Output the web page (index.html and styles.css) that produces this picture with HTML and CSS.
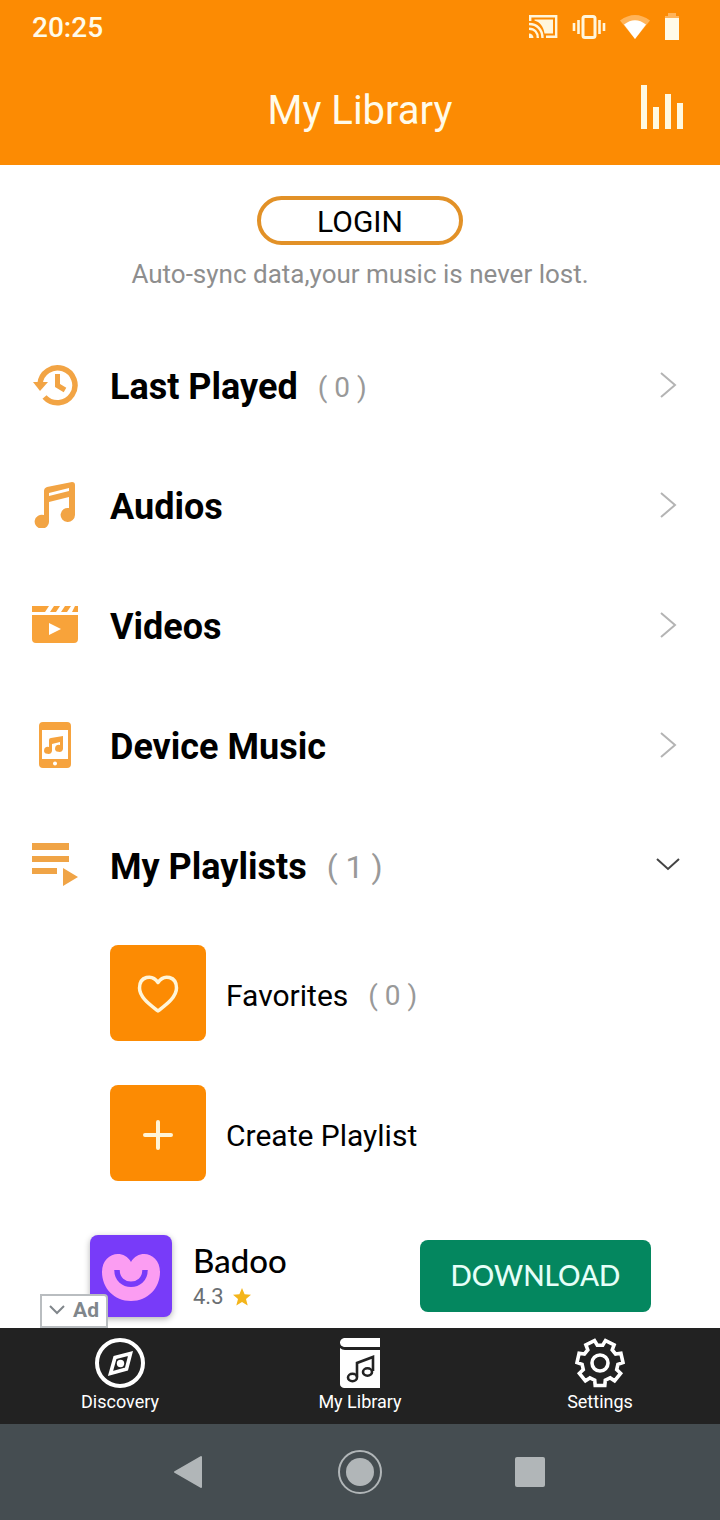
FILE: index.html
```html
<!DOCTYPE html>
<html lang="en">
<head>
<meta charset="utf-8">
<meta name="viewport" content="width=device-width, initial-scale=1">
<title>My Library</title>
<link rel="stylesheet" href="styles.css">
</head>
<body>
<header class="top">
  <div class="status">
    <time class="clock">20:25</time>
    <div class="status-icons">
      <svg width="30" height="26" viewBox="0 0 30 26" fill="none" stroke="#fff6dc" stroke-width="2.4"><path d="M1.200 7V2.200H27.200V22.800H17"/><path d="M5.500 6.500V5.500H24V19.500H15.500C14.500 12 10.500 8 5.500 6.500Z" fill="#fff6dc" stroke="none"/><path d="M0 10C8 10 13.500 15.500 13.500 24M0 14.800C5.500 14.800 8.800 18.500 8.800 24"/><path d="M0 19.500A4.500 4.500 0 0 1 4.500 24H0Z" fill="#fff6dc" stroke="none"/></svg>
      <svg width="34" height="26" viewBox="0 0 34 26" fill="none" stroke="#fff6dc"><rect x="11" y="2.500" width="12" height="21" rx="2" stroke-width="3"/><path d="M6.500 6V20M27.500 6V20" stroke-width="2.600"/><path d="M2 9V17M32 9V17" stroke-width="2.600"/></svg>
      <svg width="32" height="26" viewBox="0 0 32 26"><path d="M1 6.500Q16-4.500 31 6.500L16 25Z" fill="#ffb45a"/><path d="M5 10.500Q16 2 27 10.500L16 25Z" fill="#fff"/></svg>
      <svg width="16" height="28" viewBox="0 0 16 28"><path d="M4 0H12V3H15V6H1V3H4Z" fill="#ffb45a"/><path d="M1 5H15V27H1Z" fill="#fffbe8"/></svg>
    </div>
  </div>
  <div class="title-bar">
    <h1 class="title">My Library</h1>
    <button class="eq" aria-label="Equalizer"><svg width="44" height="44" viewBox="0 0 44 44" fill="#fff9e0"><path d="M1 0H7V44H1ZM13 22H19V44H13ZM25 9H31V44H25ZM37 18H43V44H37Z"/></svg></button>
  </div>
</header>

<main class="content">
  <section class="account">
    <button class="login">LOGIN</button>
    <p class="hint">Auto-sync data,your music is never lost.</p>
  </section>

  <nav class="menu" aria-label="Library">
    <button class="row">
      <svg class="icon" viewBox="0 0 46 46" fill="none" stroke="#f2a444"><path d="M8 22A17.500 17.500 0 1 1 12.500 35" stroke-width="5.500"/><path d="M1 20H16L8 29Z" fill="#f2a444" stroke="none"/><path d="M25.500 12V23.500L33 28" stroke-width="5"/></svg>
      <span class="label">Last Played</span><span class="count">( 0 )</span>
      <svg class="arrow" viewBox="0 0 24 30"><path d="M5 3L19 15L5 27"/></svg>
    </button>
    <button class="row">
      <svg class="icon" viewBox="0 0 46 46" fill="#f2a444"><path fill-rule="evenodd" d="M12 39V9Q12 6 15 5L40 0Q43 0 43 3V33A7.200 7 0 1 1 37 26V15L17 20V39A7.200 7 0 1 1 12 33ZM17 11V14L37 9V6Z"/></svg>
      <span class="label">Audios</span>
      <svg class="arrow" viewBox="0 0 24 30"><path d="M5 3L19 15L5 27"/></svg>
    </button>
    <button class="row">
      <svg class="icon" viewBox="0 0 46 46" fill="#f8a33a"><path d="M0 4H17L13 10H0ZM22 4H28L24 10H18ZM33 4H39L35 10H29ZM43 4H46V10H40Z"/><path fill-rule="evenodd" d="M0 13H46V37Q46 41 42 41H4Q0 41 0 37ZM17 21V33L29 27Z"/></svg>
      <span class="label">Videos</span>
      <svg class="arrow" viewBox="0 0 24 30"><path d="M5 3L19 15L5 27"/></svg>
    </button>
    <button class="row">
      <svg class="icon" viewBox="0 0 46 46" fill="#f6a33e"><path fill-rule="evenodd" d="M11 0H35Q39 0 39 4V42Q39 46 35 46H11Q7 46 7 42V4Q7 0 11 0ZM10 8V37H36V8ZM23 39.500A2 2 0 1 0 23 43.500A2 2 0 1 0 23 39.500Z"/><path fill-rule="evenodd" d="M17 28V18Q17 16 19 16L31 14V27A4 3.500 0 1 1 28 23V20L20 22V29A4 3.500 0 1 1 17 25Z"/></svg>
      <span class="label">Device Music</span>
      <svg class="arrow" viewBox="0 0 24 30"><path d="M5 3L19 15L5 27"/></svg>
    </button>
    <button class="row" aria-expanded="true">
      <svg class="icon" viewBox="0 0 46 46" fill="#f0a446"><path d="M0 1H37V8H0ZM0 14H37V20H0ZM0 26H25V32H0ZM31 26L46 35L31 44Z"/></svg>
      <span class="label">My Playlists</span><span class="count count-large">( 1 )</span>
      <svg class="arrow arrow-open" viewBox="0 0 24 30"><path d="M1 9L12 19L23 9"/></svg>
    </button>
  </nav>

  <div class="playlists">
    <button class="playlist">
      <span class="tile"><svg width="44" height="44" viewBox="0 0 44 44" fill="none" stroke="#fff5d8" stroke-width="3.500" stroke-linejoin="round"><path d="M22 40C16 35 3.500 27 3.500 17C3.500 5.500 16 2.500 22 11.500C28 2.500 40.500 5.500 40.500 17C40.500 27 28 35 22 40Z"/></svg></span>
      <span class="name">Favorites</span><span class="count">( 0 )</span>
    </button>
    <button class="playlist">
      <span class="tile"><svg width="44" height="44" viewBox="0 0 44 44" fill="none" stroke="#fff5d8" stroke-width="4" stroke-linecap="round"><path d="M22 11V37M9 24H35"/></svg></span>
      <span class="name">Create Playlist</span>
    </button>
  </div>

  <aside class="ad">
    <svg class="ad-logo" viewBox="0 0 82 82"><path d="M41 66C24 66 12 53 12 37C12 18 33 13 41 27C49 13 70 18 70 37C70 53 58 66 41 66Z" fill="#fb9df2"/><path d="M27 35C27 54 55 54 55 35" fill="none" stroke="#783bf9" stroke-width="5.500"/></svg>
    <div class="ad-info">
      <span class="ad-name">Badoo</span>
      <span class="rating">4.3 <svg width="20" height="20" viewBox="0 0 20 20"><path d="M10 1L12.600 7.200L19 7.700L14 12L15.700 18.500L10 15L4.300 18.500L6 12L1 7.700L7.400 7.200Z" fill="#f4b51b"/></svg></span>
    </div>
    <button class="download">DOWNLOAD</button>
    <button class="ad-tag"><svg width="16" height="10" viewBox="0 0 16 10" fill="none" stroke="#80868b" stroke-width="2"><path d="M1 1L8 8L15 1"/></svg>Ad</button>
  </aside>
</main>

<nav class="tabs" aria-label="Main">
  <a class="tab" href="#discovery">
    <svg width="50" height="50" viewBox="0 0 50 50" fill="none" stroke="#fff" stroke-width="4"><circle cx="25" cy="25" r="23"/><path d="M35.500 15.500L31.500 31L15.500 35.500L20 19.500Z" stroke-width="3.600"/><circle cx="25.500" cy="25.500" r="3.700" fill="#fff" stroke="none"/></svg>
    Discovery
  </a>
  <a class="tab" href="#library" aria-current="page">
    <svg width="50" height="50" viewBox="0 0 50 50"><path fill="#fff" d="M9 0H45V9H9Q5 8 5 4.500Q5 1 9 0ZM5 10Q7 12 10 12H45V50H9Q5 49 5 46Z"/><g fill="none" stroke="#222" stroke-width="2.600"><path d="M22 39V25L38 19V33"/><ellipse cx="17.500" cy="39.500" rx="4.500" ry="3.700"/><ellipse cx="32.500" cy="34" rx="4.500" ry="3.700"/></g></svg>
    My Library
  </a>
  <a class="tab" href="#settings">
    <svg width="50" height="50" viewBox="0 0 50 50" fill="none" stroke="#fff" stroke-width="3.600"><path d="M14.800 39.900L10.400 42.800L4.400 35.300L8.300 31.600L7.100 26.300L2 24.600L4.100 15.300L9.400 16L12.800 11.800L10.900 6.800L19.500 2.600L22.300 7.200H27.700L30.500 2.600L39.100 6.800L37.200 11.800L40.600 16L45.900 15.300L48 24.600L42.900 26.300L41.700 31.600L45.600 35.300L39.600 42.800L35.200 39.900L30.300 42.200L29.800 47.500H20.200L19.700 42.200Z"/><circle cx="25" cy="25" r="8"/></svg>
    Settings
  </a>
</nav>

<footer class="system">
  <button class="key" aria-label="Back"><svg width="44" height="44" viewBox="0 0 44 44" fill="#b1b6b8" stroke="#b1b6b8" stroke-width="2" stroke-linejoin="round"><path d="M7 22L33 7V37Z"/></svg></button>
  <button class="key" aria-label="Home"><svg width="44" height="44" viewBox="0 0 44 44"><circle cx="22" cy="22" r="21" fill="none" stroke="#b1b6b8" stroke-width="2"/><circle cx="22" cy="22" r="14" fill="#b1b6b8"/></svg></button>
  <button class="key" aria-label="Recent apps"><svg width="44" height="44" viewBox="0 0 44 44"><rect x="7" y="7" width="30" height="30" rx="2" fill="#b1b6b8"/></svg></button>
</footer>
</body>
</html>
```
FILE: styles.css
```css
* {
  box-sizing: border-box;
}

body {
  margin: 0;
  min-height: 100vh;
  display: flex;
  flex-direction: column;
  background: #fff;
  color: #000;
  font-family: Roboto, "Liberation Sans", sans-serif;
}

button {
  padding: 0;
  border: 0;
  background: none;
  color: inherit;
  font: inherit;
  text-align: left;
  cursor: pointer;
}

svg {
  display: block;
  flex: none;
}

.top {
  background: #fc8b03;
  color: #fffbea;
}

.status {
  height: 56px;
  padding: 0 40px 2px 32px;
  display: flex;
  align-items: center;
  justify-content: space-between;
}

.clock {
  font-size: 28px;
  font-weight: 500;
}

.status-icons {
  display: flex;
  align-items: center;
  gap: 13px;
}

.title-bar {
  padding: 29px 36px 36px;
  display: grid;
  grid-template-columns: 1fr auto 1fr;
  align-items: center;
}

.title {
  grid-column: 2;
  margin: 0;
  padding-top: 8px;
  font-size: 40px;
  line-height: 36px;
  font-weight: 400;
}

.eq {
  justify-self: end;
}

.content {
  flex: 1;
}

.account {
  padding: 31px 32px 36px;
  display: flex;
  flex-direction: column;
  align-items: center;
  gap: 14px;
}

.login {
  width: 206px;
  height: 49px;
  padding-top: 2px;
  border: 4px solid #e29127;
  border-radius: 25px;
  font-size: 30px;
  line-height: 38px;
  text-align: center;
}

.hint {
  margin: 0;
  color: #8e8e8e;
  font-size: 26px;
  line-height: 30px;
}

.row {
  width: 100%;
  height: 120px;
  padding: 0 40px 0 32px;
  display: flex;
  align-items: center;
}

.icon {
  width: 46px;
  height: 46px;
  margin-right: 32px;
}

.label {
  padding-top: 4px;
  font-size: 36px;
  font-weight: 700;
}

.count {
  margin-left: 20px;
  padding-top: 4px;
  color: #999;
  font-size: 28px;
}

.count-large {
  font-size: 32px;
}

.arrow {
  width: 24px;
  height: 30px;
  margin-left: auto;
  fill: none;
  stroke: #b4b4b4;
  stroke-width: 2;
}

.arrow-open {
  stroke: #444;
}

.playlists {
  padding: 20px 40px 44px 110px;
  display: flex;
  flex-direction: column;
  gap: 44px;
}

.playlist {
  display: flex;
  align-items: center;
  font-size: 30px;
}

.name {
  padding-top: 4px;
}

.tile {
  width: 96px;
  height: 96px;
  margin-right: 20px;
  display: grid;
  place-items: center;
  border-radius: 8px;
  background: #fc8b03;
}

.ad {
  position: relative;
  padding: 10px 69px 11px 90px;
  display: flex;
  align-items: center;
}

.ad-logo {
  width: 82px;
  height: 82px;
  margin-right: 21px;
  border-radius: 8px;
  background: #783bf9;
  box-shadow: 0 2px 6px rgba(0, 0, 0, 0.3);
}

.ad-info {
  padding-top: 2px;
  display: flex;
  flex-direction: column;
  gap: 4px;
}

.ad-name {
  font-family: Lato, sans-serif;
  font-size: 33px;
  line-height: 36px;
  font-weight: 500;
}

.rating {
  display: flex;
  align-items: center;
  gap: 8px;
  color: #6b6f73;
  font-size: 22px;
  line-height: 30px;
}

.download {
  width: 231px;
  height: 72px;
  margin-left: auto;
  padding-bottom: 2px;
  border-radius: 8px;
  background: #04875f;
  color: #e6fff8;
  font-family: Lato, sans-serif;
  font-size: 28px;
  font-weight: 500;
  text-align: center;
}

.ad-tag {
  position: absolute;
  left: 40px;
  bottom: 0;
  width: 68px;
  height: 34px;
  padding-bottom: 2px;
  display: flex;
  align-items: center;
  justify-content: center;
  gap: 8px;
  border: 2px solid #b9bdc0;
  border-top-right-radius: 4px;
  background: #fff;
  color: #80868b;
  font-size: 21px;
  font-weight: 700;
}

.tabs {
  padding: 10px 0 11px;
  display: grid;
  grid-template-columns: repeat(3, 1fr);
  background: #222;
}

.tab {
  display: flex;
  flex-direction: column;
  align-items: center;
  gap: 3px;
  color: #fff;
  font-size: 18px;
  line-height: 22px;
  text-decoration: none;
}

.system {
  height: 96px;
  display: flex;
  align-items: center;
  justify-content: center;
  gap: 126px;
  background: #454d51;
}
```
